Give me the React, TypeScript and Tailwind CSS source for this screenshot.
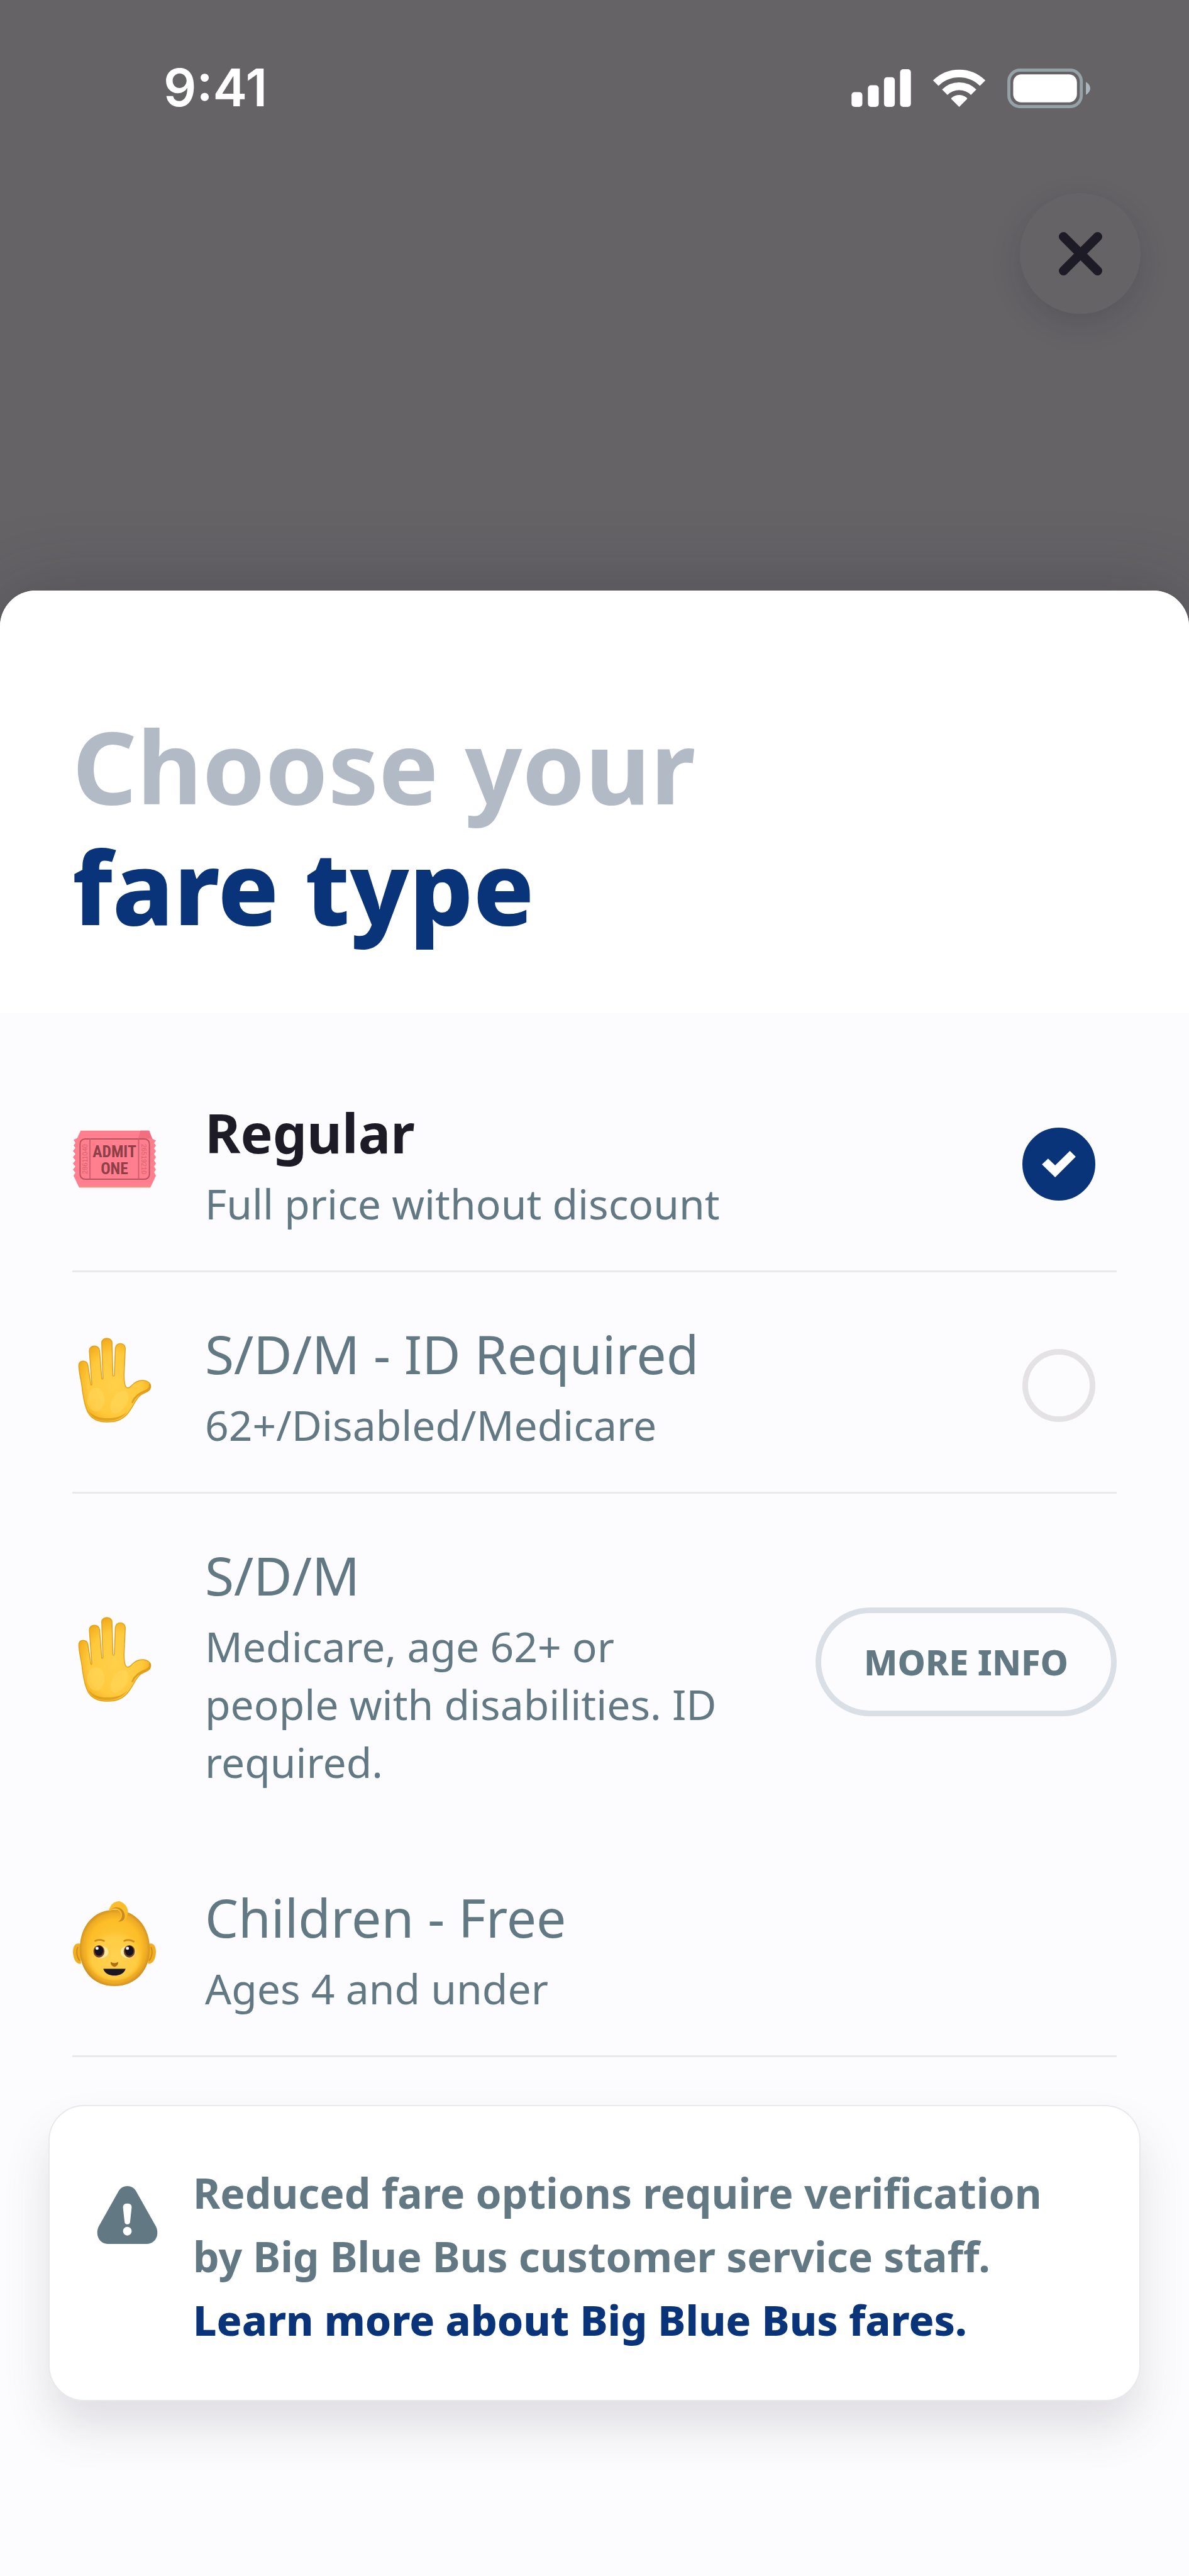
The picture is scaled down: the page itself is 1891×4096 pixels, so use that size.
import React, { useState } from "react";

type Fare = {
    id: string;
    name: string;
    note: string;
    icon: React.ReactNode;
    action: "radio" | "info" | "none";
};

function TicketIcon() {
    return (
        <svg viewBox="0 0 136 136" className="w-[134px] h-[134px]" aria-hidden="true">
            <path
                d="M13.5 22H124L129 35L135 38L132 42L135 46L132 51L135 55L132 60L135 65L132 70L135 75L132 80L135 85L132 89L135 95L126 114H11L2 95L5 90L1 85L5 80L1 75L5 70L1 65L5 60L1 55L5 50L2 46L5 42L2 37L8 34Z"
                fill="#ff7f8f"
            />
            <path d="M11 112H126L125 114H11Z" fill="#e8997f" />
            <path d="M110 22H124L129 35H106Z" fill="#f26f80" />
            <rect x="12.5" y="35.5" width="112" height="65" rx="8" fill="none" stroke="#b9525f" strokeWidth="2" />
            <path d="M28.5 35V100M107 35V100" stroke="#d05f6e" strokeWidth="2" />
            <g fill="#8f3f48" textAnchor="middle" fontFamily="'Liberation Sans Narrow', 'Roboto Condensed', 'DejaVu Sans Condensed', sans-serif" fontWeight="700">
                <text x="68" y="65" fontSize="26">ADMIT</text>
                <text x="68" y="92" fontSize="26">ONE</text>
            </g>
            <g fill="#d8616f" textAnchor="middle" fontFamily="'Liberation Sans', sans-serif" fontSize="11">
                <text transform="translate(24 68) rotate(-90)">28611040</text>
                <text transform="translate(112 68) rotate(90)">26519210</text>
            </g>
        </svg>
    );
}

function HandIcon() {
    return (
        <svg viewBox="0 0 136 138" className="w-[134px] h-[136px]" aria-hidden="true">
            <defs>
                <radialGradient id="hand-fill" cx="0.5" cy="0.55" r="0.62">
                    <stop offset="0" stopColor="#ffd04a" />
                    <stop offset="0.6" stopColor="#ffc93c" />
                    <stop offset="0.85" stopColor="#f3b01f" />
                    <stop offset="1" stopColor="#d08f14" />
                </radialGradient>
            </defs>
            <path
                d="M10.5 45C10 35.500 24 35.500 25 44L30 76Q31.500 78 31.500 74L27.500 21C27.500 11 43.500 11 44 21L47.500 66Q49 68 49.500 65L47.500 8C48 -1.500 63.500 -1.500 64 8L65.500 61Q67 63 68 60L69.500 17C70 7 85 7 85.500 17L83.500 60Q83.500 76 87 80Q90 83 95 78C101 71 108 68.500 115 69C123 70 128 75 126 81C125 87 117 88 111 92C101 99 99 112 88 124C78 134 69 136 56 136C42 136 31 132 25 120C19 108 18 96 16 83C15 70 11 60 10.500 45Z"
                fill="url(#hand-fill)"
                stroke="#e2a01c"
                strokeWidth="1.500"
                strokeLinejoin="round"
            />
            <ellipse cx="38" cy="100" rx="14" ry="19" fill="#ffdb66" opacity="0.4" />
            <ellipse cx="76" cy="104" rx="12" ry="20" fill="#ffdb66" opacity="0.4" transform="rotate(32 76 104)" />
            <path d="M26 118C33 132 45 134 57 134C70 134 80 130 89 119C80 127 70 130 57 130C44 130 34 127 26 118Z" fill="#cf8f14" opacity="0.6" />
            <path d="M97 104C101 95 109 89 118 86C123 84 126 80 125 76" fill="none" stroke="#d69617" strokeWidth="3" strokeLinecap="round" opacity="0.8" />
        </svg>
    );
}

function BabyIcon() {
    return (
        <svg viewBox="0 0 136 138" className="w-[134px] h-[136px]" aria-hidden="true">
            <defs>
                <radialGradient id="baby-head" cx="0.5" cy="0.5" r="0.52">
                    <stop offset="0" stopColor="#ffcb3d" />
                    <stop offset="0.72" stopColor="#fcbd28" />
                    <stop offset="0.88" stopColor="#edaa24" />
                    <stop offset="1" stopColor="#c98a1e" />
                </radialGradient>
                <radialGradient id="baby-face" cx="0.5" cy="0.55" r="0.5">
                    <stop offset="0" stopColor="#ffd250" />
                    <stop offset="0.8" stopColor="#ffcb42" />
                    <stop offset="1" stopColor="#ffc535" stopOpacity="0" />
                </radialGradient>
            </defs>
            <path d="M14 69C5 66 1 72 1 83C2 94 6 102 14 101Z" fill="#f2ae22" />
            <path d="M9 74C6 80 7 90 12 96" fill="none" stroke="#d08c1a" strokeWidth="2" />
            <path d="M122 69C131 66 135 72 135 83C134 94 130 102 122 101Z" fill="#f2ae22" />
            <path d="M127 74C130 80 129 90 124 96" fill="none" stroke="#d08c1a" strokeWidth="2" />
            <path d="M68 14C102 14 125 41 125 77C125 112 102 137 68 137C34 137 12 112 12 77C12 41 34 14 68 14Z" fill="url(#baby-head)" />
            <ellipse cx="68" cy="86" rx="46" ry="42" fill="url(#baby-face)" />
            <path d="M59 16C61 5 68 0 76 0C86 3 92 13 89 22C87 29 83 34 76 34C80 26 80 17 72 14C67 13 63 14 59 16Z" fill="#fbbd2c" />
            <path d="M59 16C66 8 78 11 80 20C81 26 79 30 74 33C84 33 86 27 84 19C80 9 68 6 59 16Z" fill="#c98b1e" />
            <ellipse cx="46" cy="82" rx="12" ry="10" fill="#ffe9a6" />
            <ellipse cx="90" cy="82" rx="12" ry="10" fill="#ffe9a6" />
            <ellipse cx="43" cy="81" rx="9" ry="10" fill="#7a4320" />
            <ellipse cx="92" cy="81" rx="9" ry="10" fill="#7a4320" />
            <ellipse cx="43" cy="80" rx="7" ry="8" fill="#151320" />
            <ellipse cx="92" cy="80" rx="7" ry="8" fill="#151320" />
            <circle cx="40" cy="76" r="2.500" fill="#fff" />
            <circle cx="89" cy="76" r="2.500" fill="#fff" />
            <path d="M37 64Q44 61 51 64M84 64Q91 61 99 65" fill="none" stroke="#cf8c19" strokeWidth="3" strokeLinecap="round" />
            <path d="M62 98Q68 102 74 98Q75 104 68 106Q61 104 62 98Z" fill="#b36a15" />
            <path d="M50 109H86C84 116 77 120 68 120C59 120 52 116 50 109Z" fill="#1b1724" />
        </svg>
    );
}

function StatusBar() {
    return (
        <div className="flex items-center justify-between pl-[260px] pr-[157px] text-white">
            <span className="font-[Inter,sans-serif] text-[82px] leading-[100px] font-semibold">9:41</span>
            <div className="flex items-center gap-[35px]">
                <svg viewBox="0 0 96 61" className="w-[95px] h-[60px]" fill="currentColor" aria-hidden="true">
                    <rect x="0" y="37" width="17.500" height="24" rx="5" />
                    <rect x="26.500" y="26" width="17.500" height="35" rx="5" />
                    <rect x="52.500" y="13" width="17.500" height="48" rx="5" />
                    <rect x="78.500" y="0" width="17.500" height="61" rx="5" />
                </svg>
                <svg viewBox="0 0 84 61" className="w-[83px] h-[60px]" aria-hidden="true">
                    <path d="M4.100 22.600A53.700 53.700 0 0 1 79.900 22.600" fill="none" stroke="currentColor" strokeWidth="12.500" />
                    <path d="M18.700 37.200A33 33 0 0 1 65.300 37.200" fill="none" stroke="currentColor" strokeWidth="12.500" />
                    <path d="M42 61L29.300 48.300Q28.500 47 30 46Q42 37.500 54 46Q55.500 47 54.700 48.300Z" fill="currentColor" />
                </svg>
                <svg viewBox="0 0 134 64" className="w-[132px] h-[63px]" aria-hidden="true">
                    <rect x="2.500" y="2.500" width="117" height="59" rx="18" fill="none" stroke="#95a3a9" strokeWidth="5" />
                    <rect x="9.500" y="9.500" width="103" height="45" rx="13" fill="currentColor" />
                    <path d="M127 21.500Q134 26 134 32Q134 38 127 42.500Z" fill="#a9b7bd" />
                </svg>
            </div>
        </div>
    );
}

const fares: Fare[] = [
    { id: "regular", name: "Regular", note: "Full price without discount", icon: <TicketIcon />, action: "radio" },
    { id: "sdm-id", name: "S/D/M - ID Required", note: "62+/Disabled/Medicare", icon: <HandIcon />, action: "radio" },
    { id: "sdm", name: "S/D/M", note: "Medicare, age 62+ or people with disabilities. ID required.", icon: <HandIcon />, action: "info" },
    { id: "children", name: "Children - Free", note: "Ages 4 and under", icon: <BabyIcon />, action: "none" },
];

function FareText({ fare, selected }: { fare: Fare; selected: boolean }) {
    return (
        <div className="flex-1 text-[#627983]">
            <div className={selected ? "text-[86px] leading-[133px] font-bold text-[#1d1b26]" : "text-[84px] leading-[133px]"}>
                {fare.name}
            </div>
            <div className="max-w-[850px] text-[66px] leading-[92px]">{fare.note}</div>
        </div>
    );
}

export default function App() {
    const [selected, setSelected] = useState("regular");

    return (
        <div className="flex min-h-screen flex-col bg-[#656366] font-['Noto_Sans','Open_Sans',sans-serif]">
            <header className="h-[939px] shrink-0 pt-[90px]">
                <StatusBar />
                <div className="mt-[117px] flex justify-end pr-[77px]">
                    <button
                        type="button"
                        aria-label="Close"
                        className="flex size-[192px] items-center justify-center rounded-full bg-[#656366] shadow-[0_16px_48px_rgba(30,25,35,0.16)]"
                    >
                        <svg viewBox="0 0 70 70" className="size-[69px]" aria-hidden="true">
                            <path d="M7.500 7.500L62.500 62.500M62.500 7.500L7.500 62.500" stroke="#1d1b26" strokeWidth="15" strokeLinecap="round" />
                        </svg>
                    </button>
                </div>
            </header>

            <main className="flex flex-1 flex-col rounded-t-[57px] bg-[#fcfcfe] shadow-[0_0_120px_rgba(40,35,45,0.3)]">
                <div className="rounded-t-[57px] bg-white px-[115px] pt-[182px] pb-[106px]">
                    <h1 className="text-[160px] leading-[192px]">
                        <span className="block font-bold text-[#b2bac5]">Choose your</span>
                        <span className="block font-extrabold text-[#09347a]">fare type</span>
                    </h1>
                </div>

                <ul className="px-[115px] pt-[60px]">
                    {fares.map((fare) => (
                        <li
                            key={fare.id}
                            className={fare.action === "info" ? "pt-[63px] pb-[72px]" : "border-b-3 border-[#e9e9eb] pt-[63px] pb-[61px]"}
                        >
                            {fare.action === "radio" ? (
                                <label className="flex items-center gap-[77px] pr-[34px]">
                                    <span className="pb-2">{fare.icon}</span>
                                    <FareText fare={fare} selected={fare.id === selected} />
                                    <span className="grid place-items-center pt-2">
                                        <input
                                            type="radio"
                                            name="fare"
                                            value={fare.id}
                                            checked={fare.id === selected}
                                            onChange={() => setSelected(fare.id)}
                                            className="col-start-1 row-start-1 size-[116px] appearance-none rounded-full border-9 border-[#e4e2e5] checked:border-[#09347a] checked:bg-[#09347a]"
                                        />
                                        {fare.id === selected && (
                                            <svg viewBox="0 0 55 43" className="pointer-events-none col-start-1 row-start-1 w-[54px] h-[42px]" aria-hidden="true">
                                                <path d="M0 22L10 12.500L21.500 23.500L45.500 0L55 9.500L21.500 43Z" fill="#fff" />
                                            </svg>
                                        )}
                                    </span>
                                </label>
                            ) : (
                                <div className="flex items-center gap-[77px]">
                                    <span className="pb-2">{fare.icon}</span>
                                    <FareText fare={fare} selected={false} />
                                    {fare.action === "info" && (
                                        <button
                                            type="button"
                                            className="rounded-full border-9 border-[#d9dfe5] px-[68px] text-[56px] leading-[155px] font-extrabold whitespace-nowrap text-[#627983]"
                                        >
                                            MORE INFO
                                        </button>
                                    )}
                                </div>
                            )}
                        </li>
                    ))}
                </ul>

                <div className="mx-[77px] mt-[76px] mb-[100px] flex items-start gap-[56px] rounded-[57px] border-2 border-[#e9e8eb] bg-white px-[75px] pt-[87px] pb-[77px] shadow-[0_44px_72px_rgba(60,45,55,0.14)]">
                    <svg viewBox="0 0 98 93" className="mt-10 w-[97px] h-[92px] shrink-0" aria-hidden="true">
                        <path d="M49 0C55 0 60 3 63 8L95 65C101 77 95 93 80 93H18C3 93 -3 77 3 65L35 8C38 3 43 0 49 0Z" fill="#627983" />
                        <path d="M42 34Q42 28 49 28Q56 28 56 34L53.500 57Q53 61.500 49 61.500Q45 61.500 44.500 57Z" fill="#fff" />
                        <circle cx="49" cy="72.500" r="7" fill="#fff" />
                    </svg>
                    <p className="flex-1 text-[66px] leading-[101px] font-bold text-[#627983]">
                        Reduced fare options require verification by Big Blue Bus customer service staff.
                        <a href="#fares" className="block font-extrabold text-[#09347a]">
                            Learn more about Big Blue Bus fares.
                        </a>
                    </p>
                </div>
            </main>
        </div>
    );
}
